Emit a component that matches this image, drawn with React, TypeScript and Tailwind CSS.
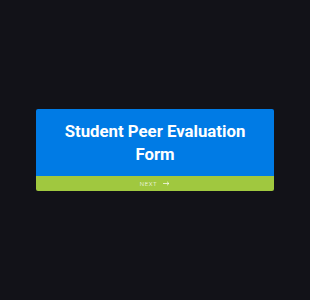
export default function App() {
  return (
    <div className="flex h-[300px] w-[310px] items-center justify-center bg-[#121218] font-['Roboto',sans-serif]">
      <div className="w-[238px] overflow-hidden rounded-[2px]">
        <div className="bg-[#007be5] px-4 pb-[10px] pt-[11px] text-center">
          <h1 className="text-[16.8px] font-bold leading-[23px] text-white">
            Student Peer Evaluation Form
          </h1>
        </div>
        <button className="flex h-[15px] w-full items-center justify-center gap-[6px] bg-[#a0c83f] text-[6px] font-light tracking-[0.1em] text-white">
          NEXT
          <svg width="7" height="5" viewBox="0 0 7 5" fill="none" stroke="white" strokeWidth="0.7">
            <path d="M0 2.5h6M4 0.7l1.9 1.8L4 4.3" />
          </svg>
        </button>
      </div>
    </div>
  );
}
